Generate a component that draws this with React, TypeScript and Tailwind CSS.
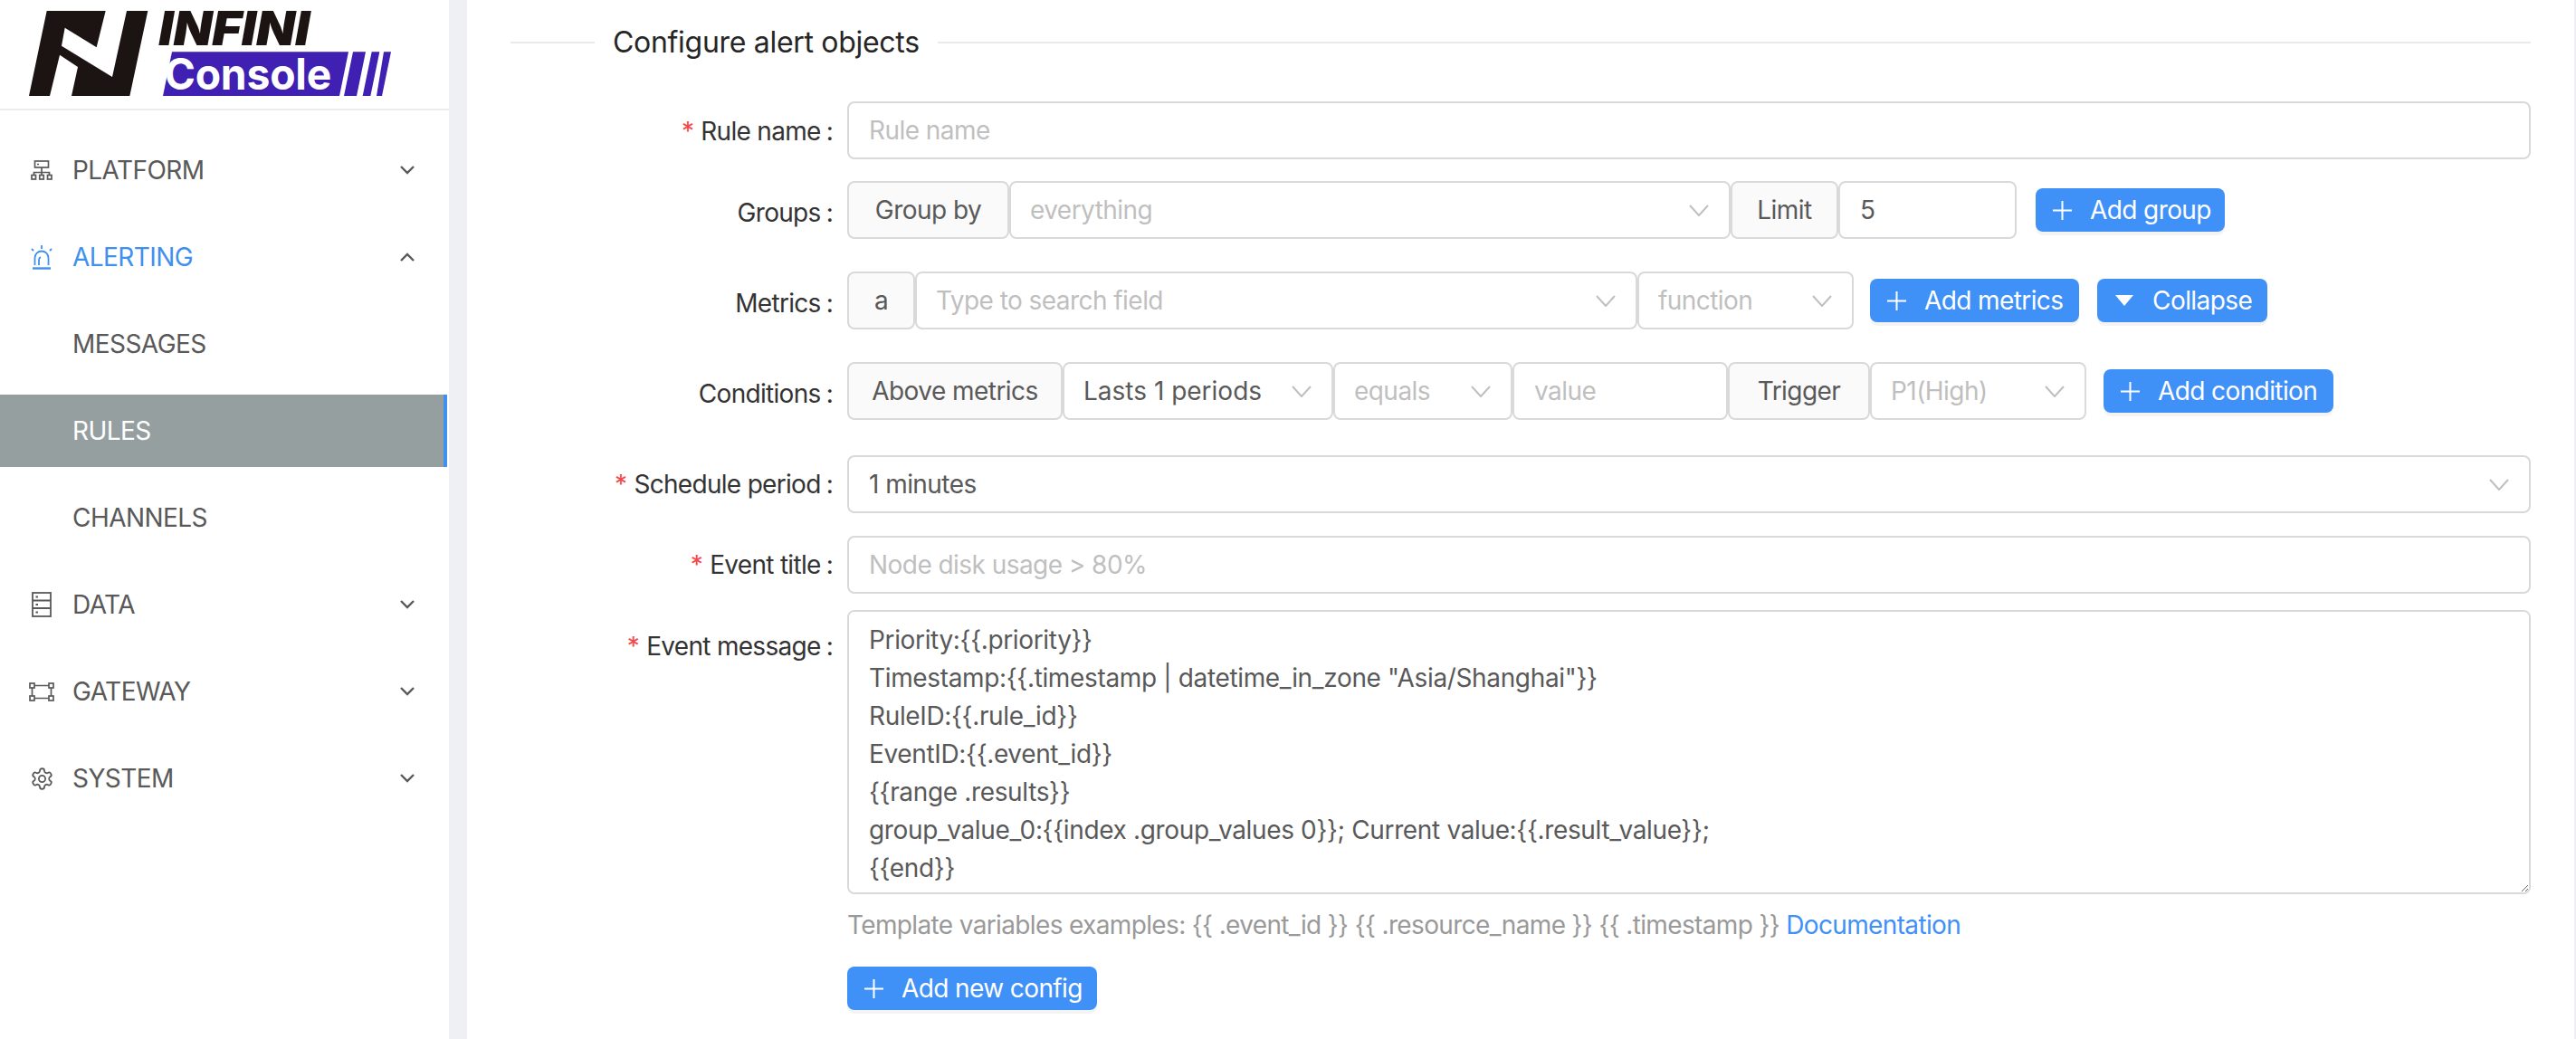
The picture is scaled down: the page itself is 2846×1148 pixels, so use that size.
function Chevron({ up = false }: { up?: boolean }) {
  return (
    <svg width="16" height="10" viewBox="0 0 16 10" fill="none" stroke="#595959" strokeWidth="2.4">
      <path d={up ? "M1 9 8 2l7 7" : "M1 1l7 7 7-7"} />
    </svg>
  );
}

function SelectArrow() {
  return (
    <svg className="shrink-0" width="22" height="13" viewBox="0 0 22 13" fill="none" stroke="#bfbfbf" strokeWidth="2">
      <path d="M1 1l10 11L21 1" />
    </svg>
  );
}

function Plus() {
  return (
    <svg className="shrink-0" width="23" height="23" viewBox="0 0 23 23" stroke="#ffffff" strokeWidth="2">
      <path d="M11.5 1v21M1 11.5h21" />
    </svg>
  );
}

function PlatformIcon() {
  return (
    <svg width="24" height="22" viewBox="0 0 24 22" fill="none" stroke="#595959" strokeWidth="1.7">
      <rect x="4.5" y="1" width="15" height="7" />
      <path d="M7 4.5h2" />
      <path d="M12 8v6M3.5 16v-2.500h17V16M12 14v2" />
      <rect x="1" y="16.500" width="4.500" height="4.500" />
      <rect x="9.750" y="16.500" width="4.500" height="4.500" />
      <rect x="18.500" y="16.500" width="4.500" height="4.500" />
    </svg>
  );
}

function AlertIcon() {
  return (
    <svg width="24" height="28" viewBox="0 0 24 28" fill="none" stroke="#4090f0" strokeWidth="1.8">
      <path d="M4.500 23V15a7.500 7.500 0 0 1 15 0v8" />
      <path d="M2 26.500h20" strokeWidth="2.400" />
      <path d="M9 23v-6a3 3 0 0 1 2-2.800" />
      <path d="M12 1v4M1 5l2 2M23 5l-2 2" />
    </svg>
  );
}

function DataIcon() {
  return (
    <svg width="22" height="28" viewBox="0 0 22 28" fill="none" stroke="#595959" strokeWidth="1.800">
      <rect x="1" y="1" width="20" height="26" />
      <path d="M1 9.500h20M1 18h20" />
      <path d="M4.500 5.500h2.500M4.500 14h2.500M4.500 22.500h2.500" />
    </svg>
  );
}

function GatewayIcon() {
  return (
    <svg width="28" height="21" viewBox="0 0 28 21" fill="none" stroke="#595959" strokeWidth="1.700">
      <rect x="1" y="1" width="5" height="5" />
      <rect x="22" y="1" width="5" height="5" />
      <rect x="1" y="15" width="5" height="5" />
      <rect x="22" y="15" width="5" height="5" />
      <path d="M6 3.500h16M6 17.500h16M3.500 6v9M24.500 6v9" />
    </svg>
  );
}

function GearIcon() {
  return (
    <svg width="27" height="27" viewBox="0 0 24 24" fill="none" stroke="#595959" strokeWidth="1.600" strokeLinejoin="round">
      <path d="M12.220 2h-.440a2 2 0 0 0-2 2v.180a2 2 0 0 1-1 1.730l-.430.250a2 2 0 0 1-2 0l-.150-.080a2 2 0 0 0-2.730.730l-.220.380a2 2 0 0 0 .730 2.730l.150.100a2 2 0 0 1 1 1.720v.510a2 2 0 0 1-1 1.740l-.150.090a2 2 0 0 0-.730 2.730l.220.380a2 2 0 0 0 2.730.730l.150-.080a2 2 0 0 1 2 0l.430.250a2 2 0 0 1 1 1.730V20a2 2 0 0 0 2 2h.440a2 2 0 0 0 2-2v-.180a2 2 0 0 1 1-1.730l.430-.250a2 2 0 0 1 2 0l.150.080a2 2 0 0 0 2.730-.730l.220-.390a2 2 0 0 0-.730-2.730l-.150-.080a2 2 0 0 1-1-1.740v-.500a2 2 0 0 1 1-1.740l.150-.090a2 2 0 0 0 .730-2.730l-.220-.380a2 2 0 0 0-2.730-.730l-.150.080a2 2 0 0 1-2 0l-.430-.250a2 2 0 0 1-1-1.730V4a2 2 0 0 0-2-2z" />
      <circle cx="12" cy="12" r="3.200" />
    </svg>
  );
}

function Logo() {
  return (
    <svg width="440" height="110" viewBox="0 0 1320 330" className="block">
      <path
        fill="#1c1412"
        d="M155 36h195l-30 121-105-65-11 60 168 103 48-219h70l-60 282H237l21-96-60-40-33 136H96z"
      />
      <text
        x="526"
        y="150"
        textLength="500"
        lengthAdjust="spacingAndGlyphs"
        fill="#1c1412"
        fontFamily="Inter, sans-serif"
        fontSize="156"
        fontWeight="900"
        fontStyle="italic"
      >
        INFINI
      </text>
      <path fill="#3f20b2" d="M570 172h585l-30 146H540z" />
      <path fill="#3f20b2" d="M1170 172h42l-30 146h-42zM1232 172h26l-30 146h-26zM1272 172h24l-30 146h-18z" />
      <text
        x="545"
        y="296"
        textLength="553"
        lengthAdjust="spacingAndGlyphs"
        fill="#ffffff"
        fontFamily="Inter, sans-serif"
        fontSize="144"
        fontWeight="700"
      >
        Console
      </text>
    </svg>
  );
}

function NavItem({
  icon,
  label,
  open,
  blue = false,
  active = false,
}: {
  icon?: React.ReactNode;
  label: string;
  open?: boolean;
  blue?: boolean;
  active?: boolean;
}) {
  const tone = active
    ? "bg-[#969fa0] text-white border-r-4 border-[#4090f0] mr-[2px]"
    : blue
      ? "text-[#4090f0]"
      : "text-[#595959]";
  return (
    <div className={`flex h-[80px] items-center ${tone}`}>
      <div className="ml-[32px] mr-[20px] flex w-[28px] shrink-0 justify-center">{icon}</div>
      <span className="flex-1 text-[28px]">{label}</span>
      {open !== undefined && (
        <div className="mr-[38px] flex">
          <Chevron up={open} />
        </div>
      )}
    </div>
  );
}

function Label({
  text,
  required = false,
  offset = "pt-[2px]",
}: {
  text: string;
  required?: boolean;
  offset?: string;
}) {
  return (
    <div
      className={`flex h-[64px] w-[372px] shrink-0 items-center justify-end pr-[16px] text-[28px] tracking-[-0.7px] text-[#333333] ${offset}`}
    >
      {required && <span className="mr-[8px] text-[#f5484d]">*</span>}
      <span>{text}</span>
      <span className="ml-[6px]">:</span>
    </div>
  );
}

function Addon({ text, className }: { text: string; className: string }) {
  return (
    <div
      className={`flex h-[64px] shrink-0 items-center justify-center rounded-lg border-2 border-[#d9d9d9] bg-[#fafafa] text-[28px] text-[#595959] ${className}`}
    >
      {text}
    </div>
  );
}

function Select({
  text,
  muted = true,
  wide = false,
  className,
}: {
  text: string;
  muted?: boolean;
  wide?: boolean;
  className: string;
}) {
  return (
    <div
      className={`flex h-[64px] shrink-0 items-center justify-between rounded-lg border-2 border-[#d9d9d9] bg-white pr-[22px] text-[28px] ${wide ? "pl-[22px]" : "pl-[21px]"} ${muted ? "text-[#bfbfbf]" : "text-[#595959]"} ${className}`}
    >
      <span className="truncate">{text}</span>
      <SelectArrow />
    </div>
  );
}

function TextInput({
  placeholder,
  value,
  className,
}: {
  placeholder?: string;
  value?: string;
  className: string;
}) {
  return (
    <input
      readOnly
      placeholder={placeholder}
      value={value ?? ""}
      className={`h-[64px] rounded-lg border-2 border-[#d9d9d9] bg-white px-[22px] text-[28px] text-[#595959] outline-none placeholder:text-[#bfbfbf] ${className}`}
    />
  );
}

function AddButton({ text, className }: { text: string; className: string }) {
  return (
    <div
      className={`flex h-[48px] shrink-0 items-center rounded-lg bg-[#3f90f7] pl-[18px] text-[28px] tracking-[-0.6px] text-white shadow-[0_4px_0_rgba(0,0,0,0.045)] ${className}`}
    >
      <Plus />
      <span className="ml-[19px] whitespace-nowrap">{text}</span>
    </div>
  );
}

const message = `Priority:{{.priority}}
Timestamp:{{.timestamp | datetime_in_zone "Asia/Shanghai"}}
RuleID:{{.rule_id}}
EventID:{{.event_id}}
{{range .results}}
group_value_0:{{index .group_values 0}}; Current value:{{.result_value}};
{{end}}`;

export default function App() {
  return (
    <div className="flex h-[1148px] w-full overflow-hidden bg-[#eef0f4] font-['Inter',sans-serif] tracking-[-0.55px]">
      <aside className="w-[496px] shrink-0 bg-white">
        <div className="h-[122px] border-b-2 border-[#ececec]">
          <Logo />
        </div>
        <nav className="flex flex-col gap-[16px] pt-[26px]">
          <NavItem icon={<PlatformIcon />} label="PLATFORM" open={false} />
          <NavItem icon={<AlertIcon />} label="ALERTING" open blue />
          <NavItem label="MESSAGES" />
          <NavItem label="RULES" active />
          <NavItem label="CHANNELS" />
          <NavItem icon={<DataIcon />} label="DATA" open={false} />
          <NavItem icon={<GatewayIcon />} label="GATEWAY" open={false} />
          <NavItem icon={<GearIcon />} label="SYSTEM" open={false} />
        </nav>
      </aside>

      <main className="ml-[20px] mr-[2px] flex-1 bg-white px-[48px]">
        <div className="flex h-[94px] items-center">
          <div className="h-[2px] w-[93px] bg-[#e9e9e9]" />
          <span className="mx-[20px] text-[32px] tracking-[-0.3px] text-[#262626]">Configure alert objects</span>
          <div className="h-[2px] flex-1 bg-[#e9e9e9]" />
        </div>

        <div className="mt-[18px] flex">
          <Label text="Rule name" required />
          <TextInput placeholder="Rule name" className="flex-1" />
        </div>

        <div className="mt-[24px] flex items-center">
          <Label text="Groups" offset="pt-[5px]" />
          <Addon text="Group by" className="w-[179px]" />
          <Select text="everything" className="w-[797px]" />
          <Addon text="Limit" className="w-[119px]" />
          <TextInput value="5" className="w-[197px]" />
          <AddButton text="Add group" className="ml-[21px] w-[209px]" />
        </div>

        <div className="mt-[36px] flex items-center">
          <Label text="Metrics" offset="pt-[5px]" />
          <Addon text="a" className="w-[75px]" />
          <Select text="Type to search field" className="w-[798px]" />
          <Select text="function" className="w-[239px]" />
          <AddButton text="Add metrics" className="ml-[18px] w-[231px]" />
          <div className="ml-[20px] flex h-[48px] w-[188px] shrink-0 items-center rounded-lg bg-[#3f90f7] pl-[19px] text-[28px] text-white shadow-[0_4px_0_rgba(0,0,0,0.045)]">
            <svg width="22" height="12" viewBox="0 0 22 12" fill="#ffffff">
              <path d="M1 0h20L11 12z" />
            </svg>
            <span className="ml-[20px]">Collapse</span>
          </div>
        </div>

        <div className="mt-[36px] flex items-center">
          <Label text="Conditions" offset="pt-[5px]" />
          <Addon text="Above metrics" className="w-[238px]" />
          <Select text="Lasts 1 periods" muted={false} className="w-[299px] tracking-normal" />
          <Select text="equals" className="w-[198px]" />
          <TextInput placeholder="value" className="w-[238px]" />
          <Addon text="Trigger" className="w-[157px]" />
          <Select text="P1(High)" className="w-[239px]" />
          <AddButton text="Add condition" className="ml-[19px] w-[254px]" />
        </div>

        <div className="mt-[39px] flex">
          <Label text="Schedule period" required offset="pt-0" />
          <Select text="1 minutes" muted={false} wide className="flex-1" />
        </div>

        <div className="mt-[25px] flex">
          <Label text="Event title" required offset="pt-0" />
          <TextInput placeholder="Node disk usage > 80%" className="flex-1" />
        </div>

        <div className="mt-[18px] flex">
          <Label text="Event message" required offset="pt-[16px]" />
          <textarea
            readOnly
            value={message}
            className="h-[314px] flex-1 rounded-lg border-2 border-[#d9d9d9] bg-white px-[22px] py-[10px] text-[28px] leading-[42px] tracking-[-0.35px] text-[#595959] outline-none"
          />
        </div>

        <div className="ml-[372px] mt-[13px] text-[28px] leading-[42px] tracking-[-0.64px] text-[#999999]">
          {"Template variables examples: {{ .event_id }} {{ .resource_name }} {{ .timestamp }} "}
          <span className="text-[#3f90f7]">Documentation</span>
        </div>

        <AddButton text="Add new config" className="ml-[372px] mt-[25px] w-[276px]" />
      </main>
    </div>
  );
}
